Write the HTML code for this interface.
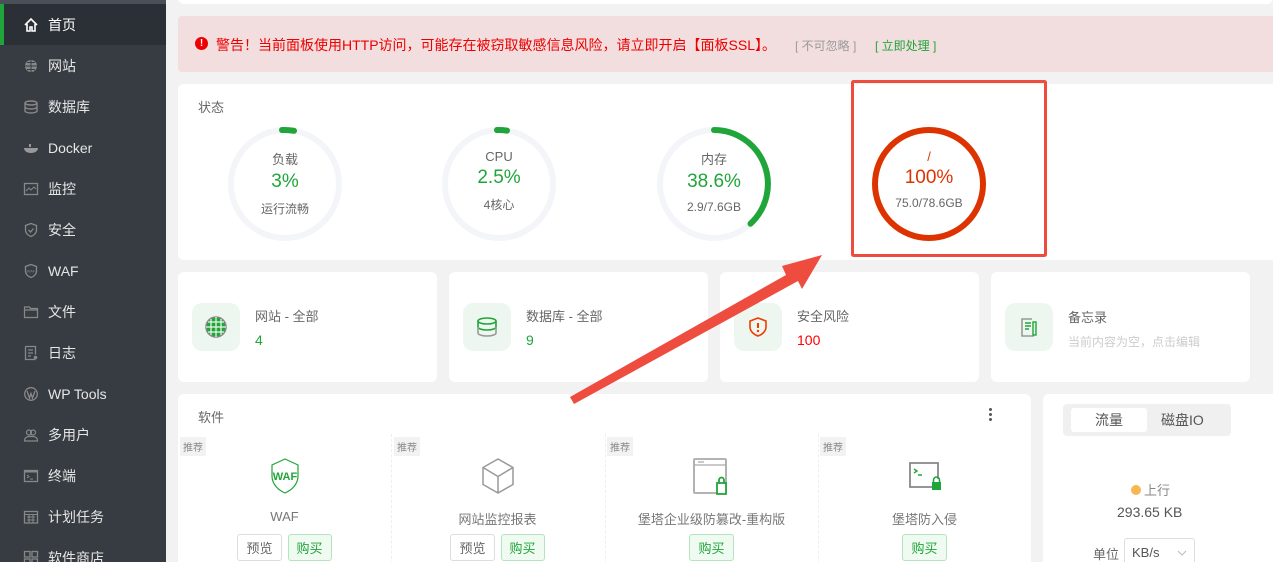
<!DOCTYPE html><html><head><meta charset="utf-8"><style>
*{margin:0;padding:0;box-sizing:border-box}
html,body{width:1273px;height:562px;overflow:hidden}
body{background:#f2f2f2;font-family:"Liberation Sans","Noto Sans CJK SC",sans-serif;position:relative;color:#666}
.sb{position:absolute;left:0;top:0;width:166px;height:562px;background:#363c42}
.sb .top{height:4px;background:#495057}
.it{height:41px;display:flex;align-items:center;padding-left:23px;color:#e6e6e6;font-size:14px}
.it svg{width:16px;height:16px;margin-right:9px}
.it.act{background:#2b3036;border-left:4px solid #20a53a;padding-left:19px;color:#fff}
.card{position:absolute;background:#fff;border-radius:6px}
.abs{position:absolute}
.ib{position:absolute;left:14px;top:31px;width:48px;height:48px;background:#eef7ef;border-radius:10px;display:flex;align-items:center;justify-content:center}
.ct{position:absolute;left:77px;top:34px;font-size:13px;color:#666}
.cv{position:absolute;left:77px;top:60px;font-size:14px}
.tag{position:absolute;top:43px;font-size:10px;background:#f2f2f2;color:#888;padding:2px 3px}
.btn{display:inline-block;border:1px solid #ddd;border-radius:3px;font-size:13px;padding:3px 8px;color:#666;margin:0 3px}
.btn.g{border-color:#b6e3bf;background:#effaf1;color:#20a53a}
.sw{position:absolute;top:62px;width:213px;height:110px;text-align:center}
.sw svg{position:absolute;left:50%;top:0;transform:translateX(-50%)}
.sw .nm{position:absolute;left:0;right:0;top:53px;font-size:13px;color:#777}
.sw .bt{position:absolute;left:0;right:0;top:78px}
</style></head><body>
<div class="sb"><div class="top"></div>
<div class="it act"><svg viewBox="0 0 16 16"><path d="M2 8L8 2l6 6M4 7v7h3v-4h2v4h3V7" fill="none" stroke="#fff" stroke-width="1.6"/></svg>首页</div>
<div class="it"><svg viewBox="0 0 16 16"><circle cx="8" cy="8" r="6" fill="#888"/><path d="M2 8h12M8 2v12M4 4.5h8M4 11.5h8" stroke="#363c42" stroke-width="1"/></svg>网站</div>
<div class="it"><svg viewBox="0 0 16 16"><ellipse cx="8" cy="4" rx="6" ry="2" fill="none" stroke="#888" stroke-width="1.4"/><path d="M2 4v8c0 1 3 2 6 2s6-1 6-2V4M2 8c0 1 3 2 6 2s6-1 6-2" fill="none" stroke="#888" stroke-width="1.4"/></svg>数据库</div>
<div class="it"><svg viewBox="0 0 16 16"><path d="M1 8h14c0 3-3 5-7 5S1 11 1 8z" fill="#999"/><rect x="6" y="4" width="2" height="3" fill="#999"/></svg>Docker</div>
<div class="it"><svg viewBox="0 0 16 16"><rect x="1.5" y="2.5" width="13" height="11" fill="none" stroke="#888" stroke-width="1.3"/><path d="M3 10l3-3 2 2 3-3 2 2" fill="none" stroke="#888"/></svg>监控</div>
<div class="it"><svg viewBox="0 0 16 16"><path d="M8 1.5l5.5 2v4.5c0 3-2.5 5.5-5.5 6.5C5 13.5 2.5 11 2.5 8V3.5z" fill="none" stroke="#888" stroke-width="1.3"/><path d="M5.5 8l2 2 3-3.5" fill="none" stroke="#888" stroke-width="1.3"/></svg>安全</div>
<div class="it"><svg viewBox="0 0 16 16"><path d="M8 1.5l5.5 2v4.5c0 3-2.5 5.5-5.5 6.5C5 13.5 2.5 11 2.5 8V3.5z" fill="none" stroke="#888" stroke-width="1.3"/><text x="8" y="9.5" font-size="4" fill="#888" text-anchor="middle">WAF</text></svg>WAF</div>
<div class="it"><svg viewBox="0 0 16 16"><path d="M1.5 3h5l1 1.5h7v9h-13z M1.5 6h13" fill="none" stroke="#888" stroke-width="1.2"/></svg>文件</div>
<div class="it"><svg viewBox="0 0 16 16"><path d="M2.5 1.5h10v8M12.5 14.5h-10v-13M5 5h5M5 8h5M5 11h3" fill="none" stroke="#888" stroke-width="1.3"/><circle cx="12.5" cy="12.5" r="1.8" fill="#888"/></svg>日志</div>
<div class="it"><svg viewBox="0 0 16 16"><circle cx="8" cy="8" r="6.3" fill="none" stroke="#888" stroke-width="1.3"/><path d="M4 5l2.5 7 1.5-4.5 1.5 4.5 2.5-7" fill="none" stroke="#888" stroke-width="1.3"/></svg>WP Tools</div>
<div class="it"><svg viewBox="0 0 16 16"><circle cx="6" cy="5.5" r="2.5" fill="none" stroke="#888" stroke-width="1.2"/><circle cx="10" cy="5.5" r="2.5" fill="none" stroke="#888" stroke-width="1.2"/><path d="M1.5 14c0-3 2-4.5 4.5-4.5h4c2.5 0 4.5 1.5 4.5 4.5z" fill="none" stroke="#888" stroke-width="1.2"/></svg>多用户</div>
<div class="it"><svg viewBox="0 0 16 16"><rect x="1.5" y="2.5" width="13" height="11" fill="none" stroke="#888" stroke-width="1.3"/><rect x="1.5" y="2.5" width="13" height="2" fill="#888"/><path d="M4 7l2 1.5L4 10M7 11h3" fill="none" stroke="#888"/></svg>终端</div>
<div class="it"><svg viewBox="0 0 16 16"><rect x="1.5" y="2.5" width="13" height="11.5" fill="none" stroke="#888" stroke-width="1.3"/><path d="M1.5 5.5h13M4 8h8M4 11h8M6 5.5v8M10 5.5v8" stroke="#888"/></svg>计划任务</div>
<div class="it"><svg viewBox="0 0 16 16"><rect x="1.5" y="1.5" width="5.5" height="5.5" fill="none" stroke="#888" stroke-width="1.3"/><rect x="9" y="1.5" width="5.5" height="5.5" fill="none" stroke="#888" stroke-width="1.3"/><rect x="1.5" y="9" width="5.5" height="5.5" fill="none" stroke="#888" stroke-width="1.3"/><rect x="9" y="9" width="5.5" height="5.5" fill="none" stroke="#888" stroke-width="1.3"/></svg>软件商店</div>
</div>

<div class="card" style="left:178px;top:-6px;width:1095px;height:10px;border-radius:0 0 6px 6px"></div>
<div class="card" style="left:178px;top:16px;width:1095px;height:56px;background:#f2dede;border-radius:4px 0 0 4px">
<div class="abs" style="left:17px;top:21px;width:13px;height:13px;border-radius:50%;background:#e00;color:#fff;font-size:10px;font-weight:bold;text-align:center;line-height:13px">!</div>
<div class="abs" style="left:38px;top:19px;font-size:14px;color:#e00;white-space:nowrap">警告！当前面板使用HTTP访问，可能存在被窃取敏感信息风险，请立即开启【面板SSL】。</div>
<div class="abs" style="left:617px;top:21px;font-size:12px;color:#999;white-space:nowrap">[ 不可忽略 ]</div>
<div class="abs" style="left:697px;top:21px;font-size:12px;color:#20a53a;white-space:nowrap">[ 立即处理 ]</div>
</div>

<div class="card" style="left:178px;top:84px;width:1095px;height:176px;border-radius:6px 0 0 6px">
<div class="abs" style="left:20px;top:13px;font-size:13px;color:#666">状态</div>
</div>
<svg class="abs" style="left:0;top:0" width="1273" height="562">
<g fill="none" stroke-width="6" stroke-linecap="round">
<circle cx="285" cy="184" r="54" stroke="#f3f5f8"/>
<circle cx="499" cy="184" r="54" stroke="#f3f5f8"/>
<circle cx="714" cy="184" r="54" stroke="#f3f5f8"/>
<path d="M282 130 A54 54 0 0 1 294 130.8" stroke="#20a53a"/>
<path d="M497 130 A54 54 0 0 1 507 130.6" stroke="#20a53a"/>
<path d="M714 130 A54 54 0 0 1 750.5 223.7" stroke="#20a53a"/>
<circle cx="929" cy="184" r="54" stroke="#dd3300"/>
</g>
<rect x="852.5" y="81.5" width="193" height="174" fill="none" stroke="#ef4c40" stroke-width="3" rx="1"/>
</svg>
<div class="abs" style="left:230px;top:149px;width:110px;text-align:center;font-size:13px;color:#666">负载<div style="font-size:19px;color:#20a53a;margin:3px 0 7px">3%</div><div style="font-size:12px">运行流畅</div></div>
<div class="abs" style="left:444px;top:149px;width:110px;text-align:center;font-size:13px;color:#666">CPU<div style="font-size:19px;color:#20a53a;margin:3px 0 7px">2.5%</div><div style="font-size:12px">4核心</div></div>
<div class="abs" style="left:659px;top:149px;width:110px;text-align:center;font-size:13px;color:#666">内存<div style="font-size:19px;color:#20a53a;margin:3px 0 7px">38.6%</div><div style="font-size:12px">2.9/7.6GB</div></div>
<div class="abs" style="left:874px;top:149px;width:110px;text-align:center;font-size:13px;color:#dd3300">/<div style="font-size:19px;color:#dd3300;margin:3px 0 7px">100%</div><div style="font-size:12px;color:#666">75.0/78.6GB</div></div>

<div class="card" style="left:178px;top:272px;width:259px;height:110px"><div class="ib"><svg width="24" height="24" viewBox="0 0 24 24"><circle cx="12" cy="12" r="10" fill="#20a53a" stroke="#888" stroke-width="1.5"/><path d="M2 12h20M12 2v20M4 7h16M4 17h16M7 4v16M17 4v16" stroke="#eef7ef" stroke-width="1.2"/></svg></div><div class="ct">网站 - 全部</div><div class="cv" style="color:#20a53a">4</div></div>
<div class="card" style="left:449px;top:272px;width:259px;height:110px"><div class="ib"><svg width="24" height="24" viewBox="0 0 24 24"><ellipse cx="12" cy="6" rx="9" ry="3" fill="none" stroke="#20a53a" stroke-width="1.6"/><path d="M3 6v6c0 1.6 4 3 9 3s9-1.4 9-3V6" fill="none" stroke="#20a53a" stroke-width="1.6"/><path d="M3 12v6c0 1.6 4 3 9 3s9-1.4 9-3v-6" fill="none" stroke="#999" stroke-width="1.6"/></svg></div><div class="ct">数据库 - 全部</div><div class="cv" style="color:#20a53a">9</div></div>
<div class="card" style="left:720px;top:272px;width:259px;height:110px"><div class="ib"><svg width="24" height="24" viewBox="0 0 24 24"><path d="M12 3l8 3v6c0 4-3.5 7.5-8 9-4.5-1.5-8-5-8-9V6z" fill="none" stroke="#f03c00" stroke-width="1.6"/><path d="M12 8v5" stroke="#f03c00" stroke-width="2"/><circle cx="12" cy="16" r="1.2" fill="#f03c00"/></svg></div><div class="ct">安全风险</div><div class="cv" style="color:#f00">100</div></div>
<div class="card" style="left:991px;top:272px;width:259px;height:110px"><div class="ib"><svg width="24" height="24" viewBox="0 0 24 24"><path d="M15 4H5v17h12" fill="none" stroke="#999" stroke-width="1.6"/><path d="M8 8h6M8 11h6M8 14h4" stroke="#20a53a" stroke-width="1.6"/><rect x="16" y="7" width="3" height="13" fill="none" stroke="#20a53a" stroke-width="1.4"/></svg></div><div class="ct" style="top:35px">备忘录</div><div class="cv" style="top:61px;font-size:12px;color:#ccc">当前内容为空，点击编辑</div></div>

<div class="card" style="left:178px;top:394px;width:853px;height:180px">
<div class="abs" style="left:20px;top:13px;font-size:13px;color:#666">软件</div>
<div class="abs" style="left:811px;top:14px;width:4px;height:16px"><div style="width:3px;height:3px;background:#555;border-radius:50%;margin-bottom:2px"></div><div style="width:3px;height:3px;background:#555;border-radius:50%;margin-bottom:2px"></div><div style="width:3px;height:3px;background:#555;border-radius:50%"></div></div>
<div class="abs" style="left:213px;top:40px;height:140px;border-left:1px dashed #eee"></div>
<div class="abs" style="left:427px;top:40px;height:140px;border-left:1px dashed #eee"></div>
<div class="abs" style="left:640px;top:40px;height:140px;border-left:1px dashed #eee"></div>
<div class="tag" style="left:2px">推荐</div><div class="tag" style="left:216px">推荐</div><div class="tag" style="left:429px">推荐</div><div class="tag" style="left:642px">推荐</div>
<div class="sw" style="left:0"><svg width="34" height="40" viewBox="0 0 34 40"><path d="M17 3l13 6v11c0 8-6 14-13 17C10 34 4 28 4 20V9z" fill="none" stroke="#20a53a" stroke-width="1.2"/><text x="17" y="24" font-size="11" font-weight="bold" fill="#20a53a" text-anchor="middle" font-family="Liberation Sans">WAF</text></svg><div class="nm">WAF</div><div class="bt"><span class="btn">预览</span><span class="btn g">购买</span></div></div>
<div class="sw" style="left:213px"><svg width="36" height="40" viewBox="0 0 36 40"><path d="M18 3l15 8.5v17L18 37 3 28.5v-17z M3 11.5l15 9 15-9 M18 20.5V37" fill="none" stroke="#999" stroke-width="1.5"/></svg><div class="nm">网站监控报表</div><div class="bt"><span class="btn">预览</span><span class="btn g">购买</span></div></div>
<div class="sw" style="left:427px"><svg width="40" height="40" viewBox="0 0 40 40"><rect x="2" y="3" width="32" height="34" rx="1" fill="none" stroke="#aaa" stroke-width="1.8"/><path d="M2 9h32M6 6h6" stroke="#aaa" stroke-width="1.2"/><rect x="25" y="27" width="9" height="11" fill="#fff" stroke="#20a53a" stroke-width="1.8"/><path d="M27 27v-3a2.5 2.5 0 0 1 5 0v3" fill="none" stroke="#20a53a" stroke-width="1.8"/></svg><div class="nm">堡塔企业级防篡改-重构版</div><div class="bt"><span class="btn g">购买</span></div></div>
<div class="sw" style="left:640px"><svg width="40" height="40" viewBox="0 0 40 40"><path d="M30 31H5V7h28v16" fill="none" stroke="#888" stroke-width="1.8"/><path d="M9 13l3 2-3 2M13 19h4" fill="none" stroke="#20a53a" stroke-width="1.4"/><rect x="27" y="26" width="9" height="8" fill="#20a53a"/><path d="M28.5 26v-2a3 3 0 0 1 6 0v2" fill="none" stroke="#20a53a" stroke-width="1.6"/></svg><div class="nm">堡塔防入侵</div><div class="bt"><span class="btn g">购买</span></div></div>
</div>

<div class="card" style="left:1043px;top:394px;width:240px;height:180px">
<div class="abs" style="left:20px;top:10px;width:168px;height:32px;background:#f0f0f0;border-radius:4px"></div>
<div class="abs" style="left:28px;top:14px;width:76px;height:24px;background:#fff;border-radius:3px;text-align:center;font-size:14px;line-height:24px;color:#555">流量</div>
<div class="abs" style="left:118px;top:14px;font-size:14px;line-height:24px;color:#555">磁盘IO</div>
<div class="abs" style="left:88px;top:86px;font-size:13px;color:#888"><span style="display:inline-block;width:10px;height:10px;border-radius:50%;background:#f7b851;margin-right:3px"></span>上行</div>
<div class="abs" style="left:74px;top:110px;font-size:14px;color:#555">293.65 KB</div>
<div class="abs" style="left:50px;top:150px;font-size:13px;color:#666">单位</div>
<div class="abs" style="left:81px;top:144px;width:71px;height:30px;border:1px solid #ddd;border-radius:3px;font-size:13px;color:#555;padding:6px 7px;white-space:nowrap">KB/s<svg style="position:absolute;left:52px;top:11px" width="10" height="6" viewBox="0 0 10 6"><path d="M1 1l4 4 4-4" fill="none" stroke="#bbb"/></svg></div>
</div>

<svg class="abs" style="left:0;top:0" width="1273" height="562"><path d="M570 397 L786 275 L782 266 L822 255 L802 289 L798 281 L574 404 Z" fill="#ef4c40"/></svg>
</body></html>
